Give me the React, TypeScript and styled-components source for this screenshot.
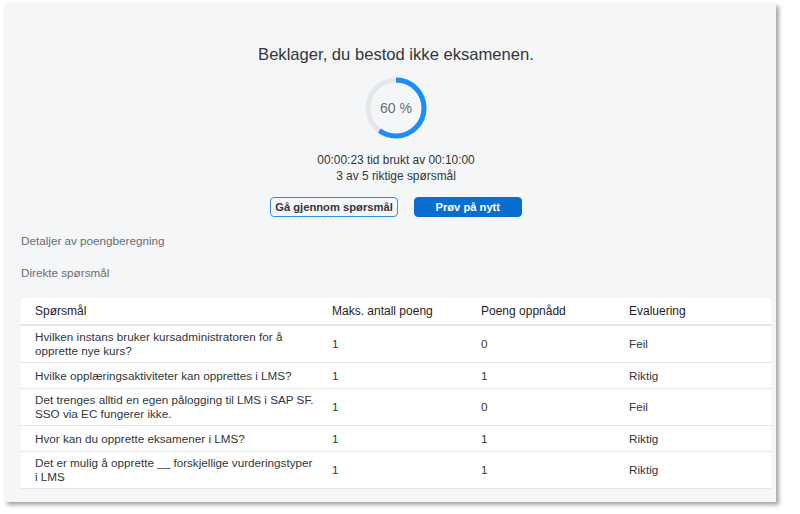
import React from 'react'
import styled, { createGlobalStyle } from 'styled-components'

const GlobalStyle = createGlobalStyle`
  html, body {
    margin: 0;
    padding: 0;
    background: #ffffff;
  }
  body {
    font-family: "Liberation Sans", Arial, sans-serif;
    color: #32363a;
  }
`

const Page = styled.div`
  width: 800px;
  height: 514px;
  padding: 3px 0 0 4px;
  box-sizing: border-box;
`

const Panel = styled.div`
  width: 772px;
  height: 499px;
  background: #f5f6f7;
  box-shadow: 3px 3px 4px rgba(0, 0, 0, 0.35);
  padding: 40px 5px 0 17px;
  box-sizing: border-box;
  display: flex;
  flex-direction: column;
`

const Summary = styled.div`
  display: flex;
  flex-direction: column;
  align-items: center;
`

const Title = styled.h1`
  margin: 0;
  font-size: 16.6px;
  line-height: 24px;
  font-weight: normal;
  color: #32363a;
`

const RingWrap = styled.div`
  position: relative;
  width: 62px;
  height: 62px;
  margin-top: 10px;
`

const RingLabel = styled.div`
  position: absolute;
  inset: 0;
  display: flex;
  align-items: center;
  justify-content: center;
  font-size: 14px;
  color: #6a6d70;
`

const InfoLine = styled.div`
  font-size: 11.9px;
  line-height: 16px;
  color: #32363a;
`

const InfoBlock = styled.div`
  margin-top: 13px;
  display: flex;
  flex-direction: column;
  align-items: center;
`

const Buttons = styled.div`
  display: flex;
  gap: 16px;
  margin-top: 13px;
`

const Button = styled.button<{ $primary?: boolean }>`
  height: 20px;
  box-sizing: border-box;
  padding: 0 4px;
  font-family: "Liberation Sans", Arial, sans-serif;
  font-size: 11.2px;
  font-weight: bold;
  border-radius: 4px;
  cursor: pointer;
  border: ${p => (p.$primary ? '1px solid #0a6ed1' : '1.5px solid #3b8be0')};
  background: ${p => (p.$primary ? '#0a6ed1' : '#f5f6f7')};
  color: ${p => (p.$primary ? '#ffffff' : '#32363a')};
  min-width: ${p => (p.$primary ? '108px' : 'auto')};
`

const SectionLabel = styled.div<{ $top: number }>`
  margin-top: ${p => p.$top}px;
  font-size: 11.7px;
  line-height: 16px;
  color: #6a6d70;
`

const Table = styled.table`
  margin-top: 17px;
  width: 750px;
  table-layout: fixed;
  border-collapse: collapse;
  font-size: 11.7px;
  color: #32363a;
`

const HeadCell = styled.th`
  background: #ffffff;
  text-align: left;
  font-weight: normal;
  font-size: 12px;
  color: #1f2226;
  height: 26px;
  padding: 0 0 0 14px;
  border-bottom: 2px solid #e5e5e5;
`

const Row = styled.tr`
  background: #ffffff;
  border-bottom: 1px solid #e5e5e5;
`

const Cell = styled.td`
  padding: 4px 2px 4px 14px;
  line-height: 14px;
  vertical-align: middle;
`

const rows = [
  { q: 'Hvilken instans bruker kursadministratoren for å opprette nye kurs?', max: 1, got: 0, ok: false, h: 34 },
  { q: 'Hvilke opplæringsaktiviteter kan opprettes i LMS?', max: 1, got: 1, ok: true, h: 26 },
  { q: 'Det trenges alltid en egen pålogging til LMS i SAP SF. SSO via EC fungerer ikke.', max: 1, got: 0, ok: false, h: 36 },
  { q: 'Hvor kan du opprette eksamener i LMS?', max: 1, got: 1, ok: true, h: 26 },
  { q: 'Det er mulig å opprette __  forskjellige vurderingstyper i LMS', max: 1, got: 1, ok: true, h: 34 },
]

function Ring({ percent }: { percent: number }) {
  const r = 28
  const c = 2 * Math.PI * r
  return (
    <RingWrap>
      <svg width="62" height="62" viewBox="0 0 62 62">
        <circle cx="31" cy="31" r={r} fill="none" stroke="#e5e8eb" strokeWidth="5" />
        <circle
          cx="31"
          cy="31"
          r={r}
          fill="none"
          stroke="#1a8cff"
          strokeWidth="5"
          strokeDasharray={`${(c * percent) / 100} ${c}`}
          transform="rotate(-90 31 31)"
        />
      </svg>
      <RingLabel>{percent} %</RingLabel>
    </RingWrap>
  )
}

export default function App() {
  return (
    <Page>
      <GlobalStyle />
      <Panel>
        <Summary>
          <Title>Beklager, du bestod ikke eksamenen.</Title>
          <Ring percent={60} />
          <InfoBlock>
            <InfoLine>00:00:23 tid brukt av 00:10:00</InfoLine>
            <InfoLine>3 av 5 riktige spørsmål</InfoLine>
          </InfoBlock>
          <Buttons>
            <Button>Gå gjennom spørsmål</Button>
            <Button $primary>Prøv på nytt</Button>
          </Buttons>
        </Summary>
        <SectionLabel $top={16}>Detaljer av poengberegning</SectionLabel>
        <SectionLabel $top={16}>Direkte spørsmål</SectionLabel>
        <Table>
          <colgroup>
            <col style={{ width: 297 }} />
            <col style={{ width: 149 }} />
            <col style={{ width: 148 }} />
            <col />
          </colgroup>
          <thead>
            <tr>
              <HeadCell>Spørsmål</HeadCell>
              <HeadCell>Maks. antall poeng</HeadCell>
              <HeadCell>Poeng oppnådd</HeadCell>
              <HeadCell>Evaluering</HeadCell>
            </tr>
          </thead>
          <tbody>
            {rows.map((r, i) => (
              <Row key={i} style={{ height: r.h }}>
                <Cell>{r.q}</Cell>
                <Cell>{r.max}</Cell>
                <Cell>{r.got}</Cell>
                <Cell>{r.ok ? 'Riktig' : 'Feil'}</Cell>
              </Row>
            ))}
          </tbody>
        </Table>
      </Panel>
    </Page>
  )
}
